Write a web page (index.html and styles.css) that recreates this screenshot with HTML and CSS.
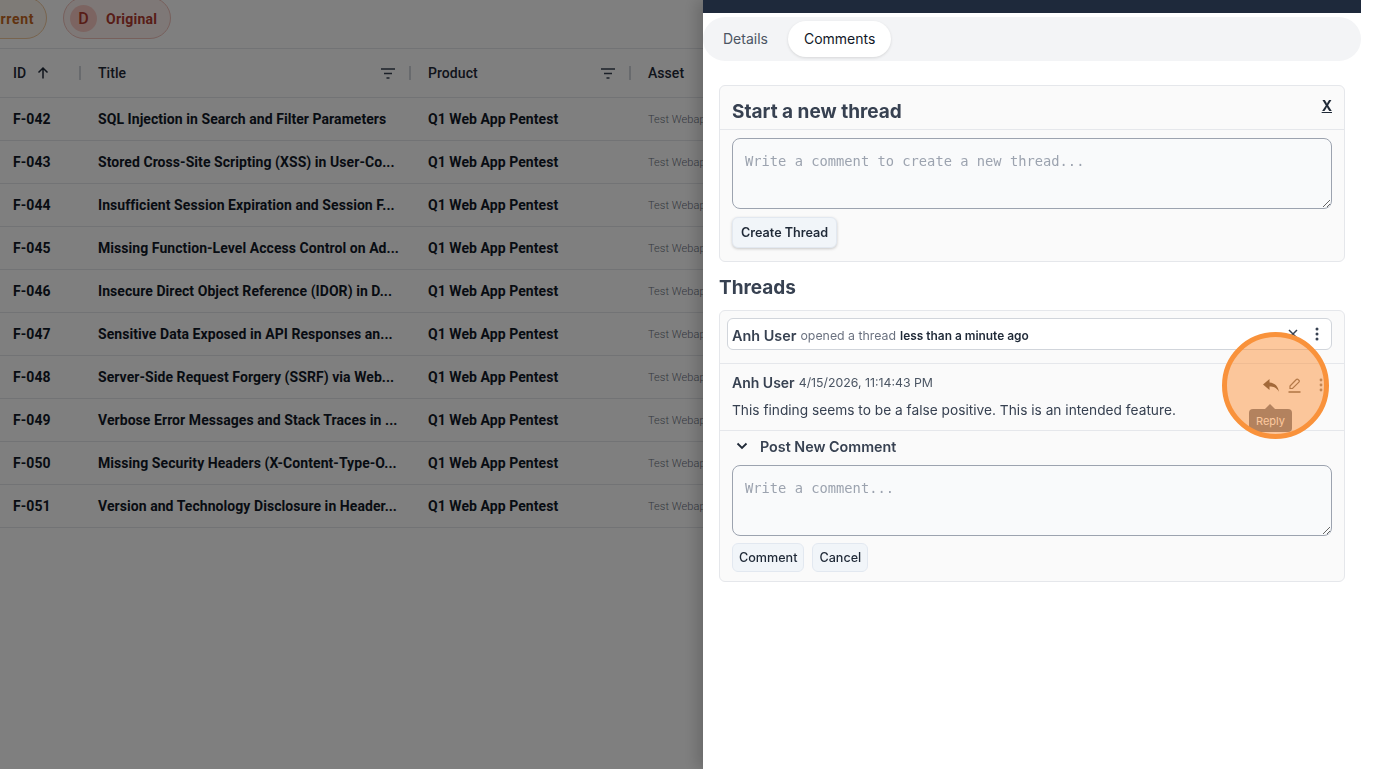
FILE: index.html
```html
<!DOCTYPE html>
<html lang="en">
<head>
<meta charset="utf-8">
<title>Findings</title>
<link rel="stylesheet" href="styles.css">
</head>
<body>
<div class="page">
  <div class="pills">
    <div class="pill pill-current"><span>Current</span></div>
    <div class="pill pill-original"><span class="pill-badge">D</span><span>Original</span></div>
  </div>
  <div class="table">
    <div class="row head">
      <div class="cell c-id"><span>ID</span><svg class="sort" width="14" height="14" viewBox="0 0 14 14"><path d="M7 12.5V2M2.5 6.5 7 2l4.5 4.5" fill="none" stroke="currentColor" stroke-width="1.5"/></svg></div>
      <div class="cell c-title"><span>Title</span><svg class="filter" width="14" height="11" viewBox="0 0 14 11"><path d="M0 1h14M3 5.5h8M5.5 10h3" fill="none" stroke="currentColor" stroke-width="1.6"/></svg></div>
      <div class="cell c-product"><span>Product</span><svg class="filter" width="14" height="11" viewBox="0 0 14 11"><path d="M0 1h14M3 5.5h8M5.5 10h3" fill="none" stroke="currentColor" stroke-width="1.6"/></svg></div>
      <div class="cell c-asset"><span>Asset</span></div>
    </div>
    <div class="row"><div class="cell c-id"><b>F-042</b></div><div class="cell c-title"><b>SQL Injection in Search and Filter Parameters</b></div><div class="cell c-product"><b>Q1 Web App Pentest</b></div><div class="cell c-asset"><small>Test Webapp</small></div></div>
    <div class="row"><div class="cell c-id"><b>F-043</b></div><div class="cell c-title"><b>Stored Cross-Site Scripting (XSS) in User-Co...</b></div><div class="cell c-product"><b>Q1 Web App Pentest</b></div><div class="cell c-asset"><small>Test Webapp</small></div></div>
    <div class="row"><div class="cell c-id"><b>F-044</b></div><div class="cell c-title"><b>Insufficient Session Expiration and Session F...</b></div><div class="cell c-product"><b>Q1 Web App Pentest</b></div><div class="cell c-asset"><small>Test Webapp</small></div></div>
    <div class="row"><div class="cell c-id"><b>F-045</b></div><div class="cell c-title"><b>Missing Function-Level Access Control on Ad...</b></div><div class="cell c-product"><b>Q1 Web App Pentest</b></div><div class="cell c-asset"><small>Test Webapp</small></div></div>
    <div class="row"><div class="cell c-id"><b>F-046</b></div><div class="cell c-title"><b>Insecure Direct Object Reference (IDOR) in D...</b></div><div class="cell c-product"><b>Q1 Web App Pentest</b></div><div class="cell c-asset"><small>Test Webapp</small></div></div>
    <div class="row"><div class="cell c-id"><b>F-047</b></div><div class="cell c-title"><b>Sensitive Data Exposed in API Responses an...</b></div><div class="cell c-product"><b>Q1 Web App Pentest</b></div><div class="cell c-asset"><small>Test Webapp</small></div></div>
    <div class="row"><div class="cell c-id"><b>F-048</b></div><div class="cell c-title"><b>Server-Side Request Forgery (SSRF) via Web...</b></div><div class="cell c-product"><b>Q1 Web App Pentest</b></div><div class="cell c-asset"><small>Test Webapp</small></div></div>
    <div class="row"><div class="cell c-id"><b>F-049</b></div><div class="cell c-title"><b>Verbose Error Messages and Stack Traces in ...</b></div><div class="cell c-product"><b>Q1 Web App Pentest</b></div><div class="cell c-asset"><small>Test Webapp</small></div></div>
    <div class="row"><div class="cell c-id"><b>F-050</b></div><div class="cell c-title"><b>Missing Security Headers (X-Content-Type-O...</b></div><div class="cell c-product"><b>Q1 Web App Pentest</b></div><div class="cell c-asset"><small>Test Webapp</small></div></div>
    <div class="row"><div class="cell c-id"><b>F-051</b></div><div class="cell c-title"><b>Version and Technology Disclosure in Header...</b></div><div class="cell c-product"><b>Q1 Web App Pentest</b></div><div class="cell c-asset"><small>Test Webapp</small></div></div>
  </div>
</div>
<div class="overlay"></div>
<aside class="drawer">
  <div class="drawer-inner">
    <div class="drawer-bar"></div>
    <div class="tabs">
      <div class="tab">Details</div>
      <div class="tab tab-active">Comments</div>
    </div>
    <div class="content">
      <section class="card new-thread">
        <header class="new-head">
          <h2>Start a new thread</h2>
          <a class="close">X</a>
        </header>
        <div class="new-body">
          <textarea class="input" placeholder="Write a comment to create a new thread..."></textarea>
          <button class="btn btn-strong">Create Thread</button>
        </div>
      </section>
      <h2 class="threads-title">Threads</h2>
      <section class="card thread">
        <div class="thread-top">
          <div class="thread-summary">
            <span class="author">Anh User</span>
            <span class="muted">opened a thread</span>
            <b class="ago">less than a minute ago</b>
            <span class="summary-icons">
              <svg width="14" height="14" viewBox="0 0 14 14"><path d="M3 3l8 8M11 3l-8 8" fill="none" stroke="#374151" stroke-width="1.5"/></svg>
              <svg width="16" height="16" viewBox="0 0 16 16" fill="#374151"><circle cx="8" cy="3" r="1.5"/><circle cx="8" cy="8" r="1.5"/><circle cx="8" cy="13" r="1.5"/></svg>
            </span>
          </div>
        </div>
        <div class="comment">
          <div class="comment-head">
            <span class="author-sm">Anh User</span>
            <span class="date">4/15/2026, 11:14:43 PM</span>
            <span class="comment-icons">
              <svg class="ic-reply" width="16" height="13" viewBox="0 0 16 13"><path d="M6.5 0 0 5.5 6.5 11V7.6c4 0 7 1.2 9.5 5.2C15.3 7.5 12 3.8 6.5 3.4z" fill="#4b4136"/></svg>
              <svg class="ic-edit" width="13" height="15" viewBox="0 0 13 15"><path d="M2 10.5V8L8.3 1.5a1.2 1.2 0 0 1 1.8 0l.8.8a1.2 1.2 0 0 1 0 1.8L4.5 10.5z" fill="none" stroke="#6d6156" stroke-width="1.2"/><path d="M0.5 14h12" fill="none" stroke="#6d6156" stroke-width="1.6"/></svg>
              <svg class="ic-more" width="4" height="14" viewBox="0 0 4 14" fill="#8a7a6a"><circle cx="2" cy="2" r="1.4"/><circle cx="2" cy="7" r="1.4"/><circle cx="2" cy="12" r="1.4"/></svg>
            </span>
          </div>
          <p class="comment-text">This finding seems to be a false positive. This is an intended feature.</p>
        </div>
        <div class="post">
          <div class="post-head">
            <svg width="12" height="8" viewBox="0 0 12 8"><path d="M1.5 1.5 6 6l4.5-4.5" fill="none" stroke="#1f2937" stroke-width="1.8"/></svg>
            <span>Post New Comment</span>
          </div>
          <textarea class="input" placeholder="Write a comment..."></textarea>
          <div class="post-actions">
            <button class="btn">Comment</button>
            <button class="btn">Cancel</button>
          </div>
        </div>
      </section>
    </div>
  </div>
</aside>
<div class="tooltip">Reply</div>
<div class="spotlight"></div>
</body>
</html>
```
FILE: styles.css
```css
* { box-sizing: border-box; }
html, body { margin: 0; height: 100%; overflow: hidden; background: #fff; }
body { font-family: Inter, "Liberation Sans", sans-serif; color: #111827; }

.page { width: 703px; font-family: Roboto, "Liberation Sans", sans-serif; letter-spacing: 0.06px; overflow: hidden; }
.pills { height: 49px; border-bottom: 1px solid #e5e7eb; display: flex; gap: 16px; margin-left: -34px; align-items: flex-end; padding-bottom: 9px; }
.pill { height: 42px; border-radius: 21px; display: flex; align-items: center; font-size: 14px; font-weight: 700; letter-spacing: 0.25px; padding-top: 1px; flex: none; }
.pill-current { width: 81px; padding-left: 15px; letter-spacing: 0.7px; color: #c2671f; background: #fdf6ee; border: 1px solid #f0c89c; }
.pill-original { width: 108px; padding-left: 6px; gap: 9px; color: #b03a2e; background: #fdf0ee; border: 1px solid #efc0b9; }
.pill-badge { width: 27px; height: 27px; border-radius: 50%; background: #f8c9c3; display: flex; align-items: center; justify-content: center; font-size: 16px; font-weight: 500; }

.row { display: flex; height: 43px; border-bottom: 1px solid #e5e7eb; align-items: center; font-size: 14px; }
.row.head { height: 49px; color: #1f2937; font-weight: 500; }
.cell { padding-left: 13px; display: flex; align-items: center; white-space: nowrap; overflow: hidden; flex: none; }
.c-id { width: 85px; }
.c-title { width: 330px; }
.c-product { width: 220px; }
.c-asset { width: 68px; }
.row b { font-weight: 700; color: #111827; }
.row small { font-size: 11px; font-weight: 300; color: #6b7280; }
.sort { margin-left: 10px; color: #1f2937; }
.filter { margin-left: auto; margin-right: 20px; color: #374151; }
.head .cell { height: 48px; position: relative; }
.head .c-id::after, .head .c-title::after, .head .c-product::after { content: ""; position: absolute; right: 4px; top: 50%; width: 2px; height: 14px; margin-top: -7px; background: #d1d5db; }

.overlay { position: fixed; inset: 0; background: rgba(0, 0, 0, 0.5); }

.drawer { position: fixed; top: 0; right: 0; bottom: 0; width: 673px; background: #fff; padding-right: 15px; box-shadow: -6px 0 14px rgba(0, 0, 0, 0.18); }
.drawer-inner { display: flex; flex-direction: column; }
.drawer-bar { height: 13px; background: #1e293b; }
.tabs { margin-top: 4px; height: 44px; border-radius: 22px; background: #f3f4f6; display: flex; align-items: center; padding-left: 4px; gap: 4px; font-size: 14px; }
.tab { padding: 0 16px; height: 36px; line-height: 36px; border-radius: 18px; color: #4b5563; font-weight: 400; }
.tab-active { background: #fff; color: #111827; font-weight: 400; box-shadow: 0 1px 3px rgba(0, 0, 0, 0.12); }

.content { padding: 24px 16px 0; }
.card { background: #fafafa; border: 1px solid #e5e7eb; border-radius: 6px; }
.new-head { height: 44px; border-bottom: 1px solid #e5e7eb; display: flex; align-items: center; justify-content: space-between; padding: 0 12px; }
.new-head h2 { margin: 8px 0 0; font-size: 19px; font-weight: 700; color: #374151; }
.close { font-size: 14px; font-weight: 700; text-decoration: underline; color: #1f2937; margin-top: -4px; }
.new-body { padding: 8px 12px 13px; display: flex; flex-direction: column; align-items: flex-start; gap: 8px; }
.input { display: block; width: 100%; height: 71px; border: 1px solid #9ca3af; border-radius: 8px; background: #f9fafb; padding: 14px 12px; font-family: "DejaVu Sans Mono", monospace; font-size: 13.76px; color: #111827; }
.input::placeholder { color: #9ca3af; }
.btn { font-family: Inter, sans-serif; font-size: 12.6px; font-weight: 500; color: #1f2937; background: #f1f5f9; border: 1px solid #e2e8f0; border-radius: 6px; height: 29px; padding: 0 6px; }
.btn-strong { font-size: 12.6px; font-weight: 600; height: 31px; padding: 0 8px; box-shadow: 0 1px 3px rgba(0, 0, 0, 0.2); }
.threads-title { margin: 14px 0 11px; font-size: 19px; font-weight: 700; color: #374151; line-height: 23px; }

.thread-top { padding: 7px 12px 7px 7px; border-bottom: 1px solid #e5e7eb; height: 53px; }
.thread-summary { height: 32px; border: 1px solid #d1d5db; border-radius: 6px; background: #fff; display: flex; align-items: center; padding: 2px 6px 0 4px; gap: 4px; }
.author { font-size: 14.4px; font-weight: 600; color: #374151; }
.muted { font-size: 12.35px; color: #6b7280; }
.ago { font-size: 11.9px; font-weight: 600; color: #1f2937; }
.summary-icons { margin-left: auto; margin-top: -2px; display: flex; align-items: center; gap: 9px; }

.comment { height: 67px; padding: 8px 12px 0; border-bottom: 1px solid #e5e7eb; }
.comment-head { display: flex; align-items: center; gap: 4px; height: 20px; }
.author-sm { font-size: 14px; font-weight: 600; color: #374151; }
.date { font-size: 12.3px; color: #4b5563; }
.comment-icons { margin-left: auto; display: flex; align-items: center; margin-right: 9px; margin-top: 6px; }
.ic-edit { margin-left: 9px; }
.ic-more { margin-left: 18px; }
.comment-text { margin: 8px 0 0; font-size: 13.72px; line-height: 20px; color: #374151; }

.post { padding: 5px 12px 9px; }
.post-head { display: flex; align-items: center; gap: 12px; height: 20px; padding-left: 4px; font-size: 14.3px; font-weight: 600; color: #374151; }
.post .input { margin-top: 9px; }
.post-actions { display: flex; gap: 8px; margin-top: 7px; }

.tooltip { position: fixed; left: 1249px; top: 409px; width: 43px; height: 23px; border-radius: 4px; background: #6b7280; color: #fff; font-size: 11px; display: flex; align-items: center; justify-content: center; }
.tooltip::before { content: ""; position: absolute; left: 16px; top: -5px; border: 5px solid transparent; border-top: 0; border-bottom-color: #6b7280; }
.spotlight { position: fixed; left: 1222px; top: 332px; width: 107px; height: 107px; border-radius: 50%; border: 5px solid #f9923b; background: rgba(251, 146, 60, 0.5); }
```
